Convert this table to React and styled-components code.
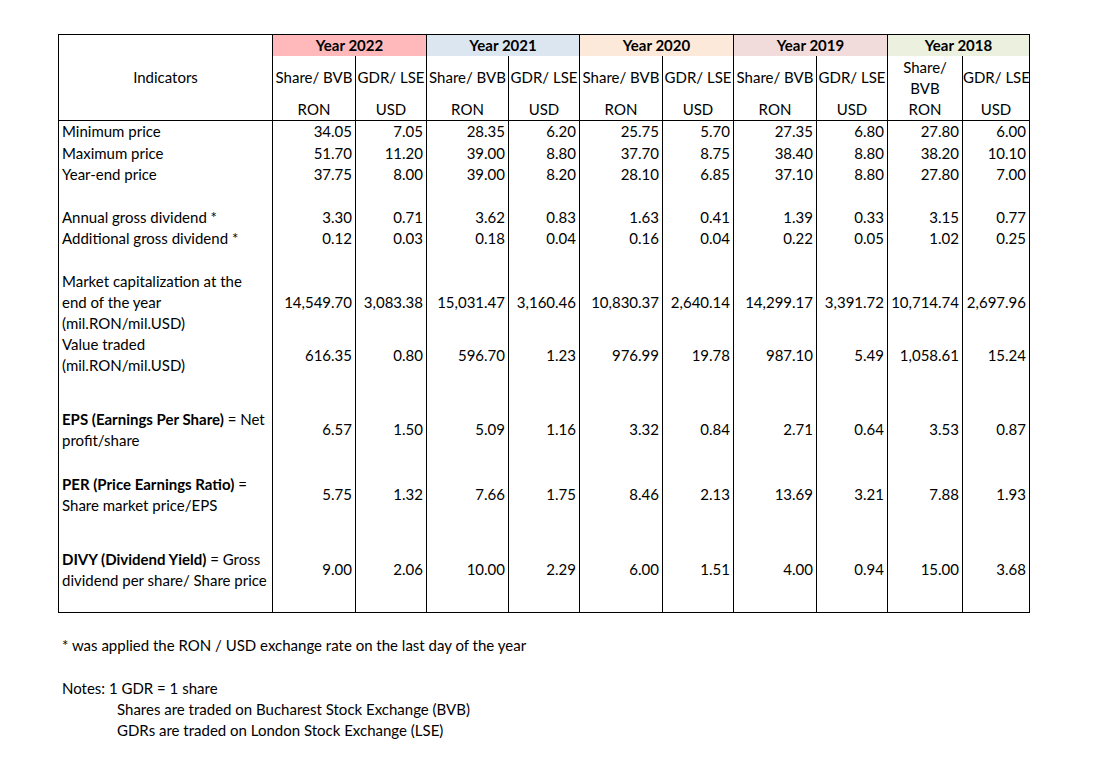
import React from "react";
import styled, { createGlobalStyle } from "styled-components";

const GlobalStyle = createGlobalStyle`
  body {
    margin: 0;
    background: #ffffff;
    font-family: Lato, "Noto Sans", "Liberation Sans", sans-serif;
    color: #000000;
  }
`;

const years = [
  { year: "Year 2022", bg: "#ffb9bb", share: "Share/ BVB" },
  { year: "Year 2021", bg: "#dce6f1", share: "Share/ BVB" },
  { year: "Year 2020", bg: "#fde9d9", share: "Share/ BVB" },
  { year: "Year 2019", bg: "#f2dcdb", share: "Share/ BVB" },
  { year: "Year 2018", bg: "#ebf1de", share: "Share/\nBVB" },
];

const colWidths = [214, 83, 71, 82, 71, 83, 71, 83, 71, 75, 67];

const rows = [
  { h: 22, label: "Minimum price", v: ["34.05", "7.05", "28.35", "6.20", "25.75", "5.70", "27.35", "6.80", "27.80", "6.00"] },
  { h: 21, label: "Maximum price", v: ["51.70", "11.20", "39.00", "8.80", "37.70", "8.75", "38.40", "8.80", "38.20", "10.10"] },
  { h: 22, label: "Year-end price", v: ["37.75", "8.00", "39.00", "8.20", "28.10", "6.85", "37.10", "8.80", "27.80", "7.00"] },
  { h: 21, blank: true },
  { h: 21, label: "Annual gross dividend *", v: ["3.30", "0.71", "3.62", "0.83", "1.63", "0.41", "1.39", "0.33", "3.15", "0.77"] },
  { h: 22, label: "Additional gross dividend *", v: ["0.12", "0.03", "0.18", "0.04", "0.16", "0.04", "0.22", "0.05", "1.02", "0.25"] },
  { h: 21, blank: true },
  {
    h: 63,
    label: (
      <>
        Market capitalization at the
        <br />
        end of the year
        <br />
        (mil.RON/mil.USD)
      </>
    ),
    v: ["14,549.70", "3,083.38", "15,031.47", "3,160.46", "10,830.37", "2,640.14", "14,299.17", "3,391.72", "10,714.74", "2,697.96"],
  },
  {
    h: 43,
    label: (
      <>
        Value traded
        <br />
        (mil.RON/mil.USD)
      </>
    ),
    v: ["616.35", "0.80", "596.70", "1.23", "976.99", "19.78", "987.10", "5.49", "1,058.61", "15.24"],
  },
  { h: 21, blank: true },
  {
    h: 64,
    label: (
      <>
        <b>EPS (Earnings Per Share)</b> = Net
        <br />
        profit/share
      </>
    ),
    v: ["6.57", "1.50", "5.09", "1.16", "3.32", "0.84", "2.71", "0.64", "3.53", "0.87"],
  },
  {
    h: 66,
    label: (
      <>
        <b>PER (Price Earnings Ratio)</b> =
        <br />
        Share market price/EPS
      </>
    ),
    v: ["5.75", "1.32", "7.66", "1.75", "8.46", "2.13", "13.69", "3.21", "7.88", "1.93"],
  },
  {
    h: 85,
    label: (
      <>
        <b>DIVY (Dividend Yield)</b> = Gross
        <br />
        dividend per share/ Share price
      </>
    ),
    v: ["9.00", "2.06", "10.00", "2.29", "6.00", "1.51", "4.00", "0.94", "15.00", "3.68"],
  },
];

export default function App() {
  return (
    <Page>
      <GlobalStyle />
      <Sheet>
        <colgroup>
          {colWidths.map((w, i) => (
            <col key={i} style={{ width: w }} />
          ))}
        </colgroup>
        <thead>
          <Row $h={20}>
            <HeadLabel rowSpan={3}>Indicators</HeadLabel>
            {years.map((y) => (
              <YearCell key={y.year} colSpan={2} $bg={y.bg}>
                {y.year}
              </YearCell>
            ))}
          </Row>
          <Row $h={43}>
            {years.map((y) => (
              <React.Fragment key={y.year}>
                <SubCell>{y.share}</SubCell>
                <SubCell>GDR/ LSE</SubCell>
              </React.Fragment>
            ))}
          </Row>
          <Row $h={21}>
            {years.map((y) => (
              <React.Fragment key={y.year}>
                <UnitCell>RON</UnitCell>
                <UnitCell>USD</UnitCell>
              </React.Fragment>
            ))}
          </Row>
        </thead>
        <tbody>
          {rows.map((r, i) => (
            <Row key={i} $h={r.h}>
              <LabelCell>{r.blank ? "" : r.label}</LabelCell>
              {(r.v || Array(10).fill("")).map((val, j) => (
                <NumCell key={j}>{val}</NumCell>
              ))}
            </Row>
          ))}
        </tbody>
      </Sheet>
      <Notes>
        <Note>* was applied the RON / USD exchange rate on the last day of the year</Note>
        <Note $gap>Notes: 1 GDR = 1 share</Note>
        <Note $indent>Shares are traded on Bucharest Stock Exchange (BVB)</Note>
        <Note $indent>GDRs are traded on London Stock Exchange (LSE)</Note>
      </Notes>
    </Page>
  );
}

const Page = styled.div`
  padding: 34px 0 0 58px;
  min-height: 100vh;
  box-sizing: border-box;
`;

const Sheet = styled.table`
  border-collapse: collapse;
  table-layout: fixed;
  width: 972px;
  font-size: 15px;
  line-height: 21px;
  border: 1px solid #000;
`;

const Row = styled.tr`
  height: ${(p) => p.$h}px;
`;

const Cell = styled.td`
  padding: 0 3px;
  border-left: 1px solid #000;
  border-right: 1px solid #000;
  vertical-align: middle;
  white-space: nowrap;
`;

const HeadLabel = styled(Cell).attrs({ as: "th" })`
  font-weight: normal;
  text-align: center;
  border-bottom: 1px solid #000;
`;

const YearCell = styled(Cell).attrs({ as: "th" })`
  background: ${(p) => p.$bg};
  font-weight: bold;
  text-align: center;
  padding: 0;
`;

const SubCell = styled(Cell).attrs({ as: "th" })`
  font-weight: normal;
  text-align: center;
  padding: 0;
  white-space: pre;
`;

const UnitCell = styled(Cell).attrs({ as: "th" })`
  font-weight: normal;
  text-align: center;
  border-bottom: 1px solid #000;
`;

const LabelCell = styled(Cell)`
  text-align: left;
  padding-left: 3px;
  b {
    font-weight: bold;
  }
`;

const NumCell = styled(Cell)`
  text-align: right;
`;

const Notes = styled.div`
  margin: 22px 0 0 4px;
  font-size: 15px;
  line-height: 21px;
`;

const Note = styled.div`
  margin-top: ${(p) => (p.$gap ? "22px" : "0")};
  padding-left: ${(p) => (p.$indent ? "55px" : "0")};
`;
